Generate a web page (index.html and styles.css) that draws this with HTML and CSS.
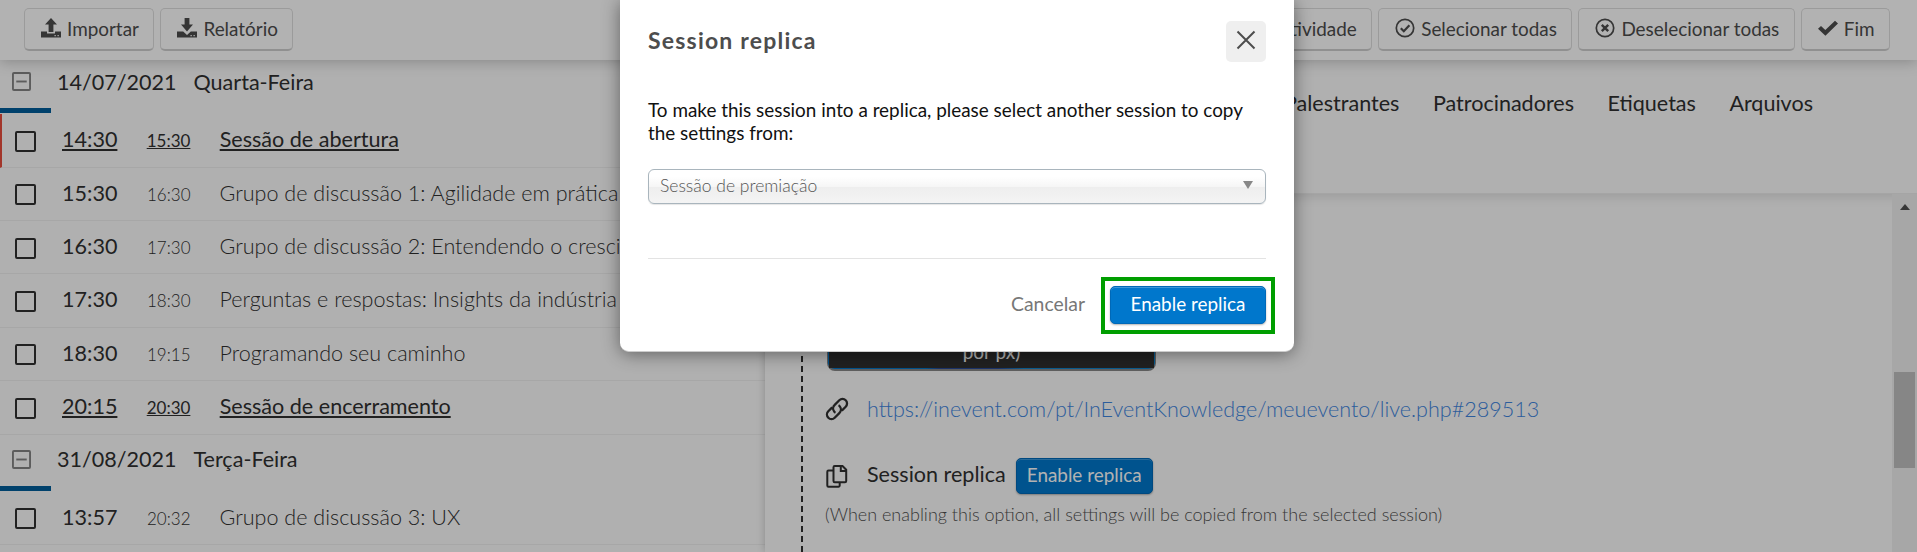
FILE: index.html
```html
<!DOCTYPE html>
<html lang="pt">
<head>
  <meta charset="UTF-8">
  <title>Session replica</title>
  <link rel="stylesheet" href="styles.css">
</head>
<body>

  <div class="app">
    <header class="toolbar">
      <div class="btn-group">
        <button class="tool-btn">
          <svg class="icon" viewBox="0 0 20 20"><path d="M10 0l6 6.5h-3.6V14H7.6V6.5H4z"/><path d="M0 13.500h6V15.500h8V13.500h6v6H0zM13.500 17v1.200h1.300V17zM16.500 17v1.200h1.300V17z" fill-rule="evenodd"/></svg>
          Importar
        </button>
        <button class="tool-btn">
          <svg class="icon" viewBox="0 0 20 20"><path d="M7.600 0h4.800v6.500H16L10 13.500 4 6.500h3.600z"/><path d="M0 13.500h6.200L10 17l3.800-3.500H20v6H0zM13.500 17v1.200h1.300V17zM16.500 17v1.200h1.300V17z" fill-rule="evenodd"/></svg>
          Relatório
        </button>
      </div>
      <div class="btn-group">
        <button class="tool-btn">
          <svg class="icon" viewBox="0 0 20 20"><path d="M8.500 2h3v6.500H18v3h-6.500V18h-3v-6.500H2v-3h6.500z"/></svg>
          Nova atividade
        </button>
        <button class="tool-btn">
          <svg class="icon line" viewBox="0 0 20 20"><circle cx="10" cy="10" r="8.700"/><path d="M5.800 10.200l3 3 5.600-5.900" stroke-width="2.200"/></svg>
          Selecionar todas
        </button>
        <button class="tool-btn">
          <svg class="icon line" viewBox="0 0 20 20"><circle cx="10" cy="10" r="8.700"/><path d="M6.800 6.800l6.400 6.400M13.200 6.800l-6.400 6.400" stroke-width="2.400"/></svg>
          Deselecionar todas
        </button>
        <button class="tool-btn">
          <svg class="icon" viewBox="0 0 20 20"><path d="M0 10.800L3 7.900l4.300 4L17 2.700l3 2.900L7.400 17.700z"/></svg>
          Fim
        </button>
      </div>
    </header>

    <main class="columns">
      <section class="schedule">
        <div class="day">
          <svg class="toggle" viewBox="0 0 20 20"><rect x="1" y="1" width="18" height="18" rx="1"/><path d="M4.500 10h11"/></svg>
          <span class="date">14/07/2021</span><span>Quarta-Feira</span>
        </div>
        <div class="row replica current"><i class="check"></i><span class="start">14:30</span><span class="end">15:30</span><span class="name">Sessão de abertura</span></div>
        <div class="row"><i class="check"></i><span class="start">15:30</span><span class="end">16:30</span><span class="name">Grupo de discussão 1: Agilidade em prática</span></div>
        <div class="row"><i class="check"></i><span class="start">16:30</span><span class="end">17:30</span><span class="name">Grupo de discussão 2: Entendendo o crescimento</span></div>
        <div class="row"><i class="check"></i><span class="start">17:30</span><span class="end">18:30</span><span class="name">Perguntas e respostas: Insights da indústria</span></div>
        <div class="row"><i class="check"></i><span class="start">18:30</span><span class="end">19:15</span><span class="name">Programando seu caminho</span></div>
        <div class="row replica"><i class="check"></i><span class="start">20:15</span><span class="end">20:30</span><span class="name">Sessão de encerramento</span></div>
        <div class="day">
          <svg class="toggle" viewBox="0 0 20 20"><rect x="1" y="1" width="18" height="18" rx="1"/><path d="M4.500 10h11"/></svg>
          <span class="date">31/08/2021</span><span>Terça-Feira</span>
        </div>
        <div class="row"><i class="check"></i><span class="start">13:57</span><span class="end">20:32</span><span class="name">Grupo de discussão 3: UX</span></div>
      </section>

      <section class="details">
        <nav class="tabs">
          <a>Palestrantes</a>
          <a>Patrocinadores</a>
          <a>Etiquetas</a>
          <a>Arquivos</a>
        </nav>
        <div class="scroller">
          <div class="content">
            <div class="banner"><div class="banner-text">por px)</div></div>
            <div class="field link-field">
              <svg class="field-icon" viewBox="0 0 24 24"><path d="M9.200 14.600a5 5 0 0 1 .5-6.700l4.600-4.600a4.400 4.400 0 0 1 6.400 6.400l-3.900 3.900M14.800 9.400a5 5 0 0 1-.5 6.700l-4.600 4.600a4.400 4.400 0 0 1-6.400-6.400l3.900-3.900M9.200 14.600q.5.700 1.300 1.100M14.800 9.400q-.5-.7-1.300-1.100" stroke-width="2.300"/></svg>
              <a class="live-link">https://inevent.com/pt/InEventKnowledge/meuevento/live.php#289513</a>
            </div>
            <div class="field replica-field">
              <svg class="field-icon" viewBox="0 0 24 24"><path d="M8 6.500H3.500a1.200 1.200 0 0 0-1.200 1.200V21.500a1.200 1.200 0 0 0 1.200 1.200H13.500a1.200 1.200 0 0 0 1.200-1.200V18.500"/><path d="M9.700 2h7.800l3.700 3.700V17a1.200 1.200 0 0 1-1.200 1.200H9.700A1.200 1.200 0 0 1 8.500 17V3.200A1.200 1.200 0 0 1 9.700 2zM15.800 2v5h5"/></svg>
              <span class="label">Session replica</span>
              <button class="primary small">Enable replica</button>
            </div>
            <p class="hint">(When enabling this option, all settings will be copied from the selected session)</p>
          </div>
          <div class="scrollbar">
            <div class="scroll-up"></div>
            <div class="scroll-thumb"></div>
          </div>
        </div>
      </section>
    </main>
  </div>

  <div class="overlay">
    <div class="modal">
      <div class="modal-head">
        <h2>Session replica</h2>
        <button class="close"><svg viewBox="0 0 20 20"><path d="M1.500 1.500l17 17M18.500 1.500l-17 17"/></svg></button>
      </div>
      <p class="modal-text">To make this session into a replica, please select another session to copy the settings from:</p>
      <div class="select"><span>Sessão de premiação</span><i class="caret"></i></div>
      <div class="modal-foot">
        <a class="cancel">Cancelar</a>
        <div class="highlight"><button class="primary">Enable replica</button></div>
      </div>
    </div>
  </div>

</body>
</html>
```
FILE: styles.css
```css
* {
  box-sizing: border-box;
}
body {
  margin: 0;
  height: 552px;
  overflow: hidden;
  font-family: Lato, "Liberation Sans", sans-serif;
  color: #303030;
  background: #fcfcfc;
}
button {
  font-family: inherit;
  margin: 0;
}
.app {
  height: 552px;
  display: flex;
  flex-direction: column;
}

/* top toolbar */
.toolbar {
  flex: none;
  height: 60px;
  padding: 8px 27px 9px 24px;
  display: flex;
  justify-content: space-between;
  background: #fff;
  box-shadow: 0 1px 14px rgba(0, 0, 0, 0.25);
  position: relative;
  z-index: 2;
}
.btn-group {
  display: flex;
  gap: 6px;
}
.tool-btn {
  display: flex;
  align-items: center;
  gap: 6px;
  height: 43px;
  padding: 0 14.5px 2px 16px;
  font-size: 18.9px;
  color: #4d4d4d;
  background: #fff;
  border: 1px solid #dedede;
  border-bottom: 2px solid #cfcfcf;
  border-radius: 5px;
  white-space: nowrap;
}
.icon {
  width: 20px;
  height: 20px;
  margin-top: -1px;
  fill: #4d4d4d;
}
.icon.line {
  fill: none;
  stroke: #4d4d4d;
  stroke-width: 1.7;
}

.columns {
  flex: 1;
  display: flex;
  min-height: 0;
}

/* session list */
.schedule {
  width: 765px;
  flex: none;
  margin-top: -3px;
  font-size: 21.56px;
  overflow: hidden;
}
.day {
  height: 57.2px;
  padding: 0 0 8px 12px;
  display: flex;
  align-items: center;
  background: linear-gradient(#005d9b, #005d9b) 0 51px / 51px 5px no-repeat;
}
.toggle {
  width: 19px;
  height: 19px;
  margin-right: 26px;
  fill: none;
  stroke: #858585;
  stroke-width: 2;
}
.date {
  width: 136.5px;
}
.row {
  height: 53.4px;
  padding: 0 0 1px 15px;
  display: flex;
  align-items: baseline;
  line-height: 51px;
  border-bottom: 1px solid #f0f0f0;
  white-space: nowrap;
}
.row.current {
  border-left: 2px solid #e84c3d;
  padding-left: 13px;
}
.check {
  width: 21px;
  height: 21px;
  margin: 3px 26px 0 0;
  border: 2px solid #303030;
  border-radius: 2px;
  align-self: center;
}
.start {
  width: 85px;
}
.end {
  width: 72.5px;
  font-size: 17px;
  font-weight: 300;
}
.name {
  font-weight: 300;
}
.replica .start, .replica .end, .replica .name {
  width: auto;
  font-weight: 400;
  text-decoration: underline;
}
.replica .start, .replica .end {
  margin-right: 29.3px;
}

/* session details */
.details {
  flex: 1;
  display: flex;
  flex-direction: column;
  background: #fcfcfc;
  box-shadow: 0 0 8px rgba(0, 0, 0, 0.22);
}
.tabs {
  height: 134px;
  flex: none;
  padding: 30px 104px 0 0;
  display: flex;
  justify-content: flex-end;
  gap: 33.5px;
  font-size: 21.56px;
  line-height: 26px;
  border-bottom: 1px solid #ececec;
  box-shadow: 0 1px 12px rgba(0, 0, 0, 0.15);
}
.scroller {
  flex: 1;
  min-height: 0;
  display: flex;
  justify-content: space-between;
}
.content {
  margin-left: 36px;
  padding-left: 24px;
  background: repeating-linear-gradient(#303030 0 6px, transparent 6px 10px) 0 2px / 2px 100% no-repeat;
}
.banner {
  width: 329px;
  height: 177px;
  margin-left: 2px;
  padding: 0 1px 1px;
  background: linear-gradient(90deg, #0077cc 0 30%, #274a9a 34% 52%, #0f85cf 60%);
  border: 1px solid #888;
  border-width: 0 1px 2px;
  border-radius: 0 0 8px 8px;
}
.banner-text {
  height: 174px;
  display: flex;
  align-items: flex-end;
  justify-content: center;
  padding-bottom: 5px;
  font-size: 19px;
  color: #fff;
  background: #303030;
}
.field {
  display: flex;
  align-items: center;
  font-size: 21.56px;
}
.field-icon {
  width: 24px;
  height: 24px;
  margin-right: 18px;
  fill: none;
  stroke: #303030;
  stroke-width: 2;
}
.link-field {
  height: 38px;
  margin-top: 19px;
}
.live-link {
  color: #3f86e0;
  font-weight: 300;
}
.replica-field {
  height: 38px;
  margin-top: 29px;
}
.label {
  padding-bottom: 4px;
}
.hint {
  margin: 8px 0 0;
  font-size: 18px;
  line-height: 23px;
  font-weight: 300;
  color: #505050;
}
.scrollbar {
  width: 25px;
  background: #f0f0f0;
  padding: 10px 2px 0;
}
.scroll-up {
  width: 0;
  margin: 0 auto;
  border: 5px solid transparent;
  border-top: 0;
  border-bottom: 6px solid #505050;
}
.scroll-thumb {
  height: 96px;
  margin-top: 162px;
  background: #c1c1c1;
}

.primary {
  height: 38px;
  width: 156px;
  padding: 0 0 3px;
  font-size: 18.9px;
  color: #fff;
  background: #0077cc;
  border: 1px solid #0069b8;
  border-radius: 5px;
  box-shadow: inset 0 1px 0 #3c98da, 0 1px 2px rgba(0, 0, 0, 0.3);
}
.primary.small {
  width: 137px;
  height: 36px;
  margin-left: 10px;
  padding-bottom: 4px;
}

/* modal */
.overlay {
  position: absolute;
  inset: 0;
  z-index: 10;
  display: flex;
  justify-content: center;
  align-items: flex-start;
  background: rgba(0, 0, 0, 0.3);
}
.modal {
  width: 674px;
  height: 352px;
  margin-right: 3px;
  padding: 21px 28px 0;
  background: #fff;
  border-bottom: 1px solid #ccc;
  border-radius: 0 0 9px 9px;
  box-shadow: 0 2px 18px rgba(0, 0, 0, 0.45);
}
.modal-head {
  height: 41px;
  display: flex;
  justify-content: space-between;
}
.modal-head h2 {
  margin: 0;
  font-size: 23px;
  line-height: 38px;
  letter-spacing: 1.2px;
  color: #4d4d4d;
}
.close {
  width: 40px;
  height: 41px;
  padding: 0 0 4px;
  border: 0;
  border-radius: 5px;
  background: #efefef;
  display: flex;
  align-items: center;
  justify-content: center;
}
.close svg {
  width: 20px;
  height: 20px;
  fill: none;
  stroke: #4d4d4d;
  stroke-width: 2;
}
.modal-text {
  margin: 36px 0 25px;
  font-size: 18.9px;
  line-height: 23px;
  color: #111;
}
.select {
  height: 35px;
  padding: 0 12px 3px 11px;
  display: flex;
  align-items: center;
  justify-content: space-between;
  font-size: 17.5px;
  font-weight: 300;
  color: #555;
  border: 1px solid #a9b5bd;
  border-radius: 6px;
  background: linear-gradient(#fff 20%, #f6f6f6 50%, #eee 52%, #f4f4f4 100%);
  box-shadow: 0 1px 1px rgba(0, 0, 0, 0.1);
}
.caret {
  border: 5px solid transparent;
  border-top: 8px solid #888;
  border-bottom: 0;
}
.modal-foot {
  margin-top: 54px;
  padding-top: 18px;
  display: flex;
  justify-content: flex-end;
  align-items: center;
  border-top: 1px solid #e3e3e3;
}
.cancel {
  margin-right: 16px;
  padding-bottom: 4px;
  font-size: 19.4px;
  color: #777;
}
.highlight {
  margin-right: -9px;
  padding: 5px;
  height: 57px;
  border: 4px solid #009e00;
}
```
